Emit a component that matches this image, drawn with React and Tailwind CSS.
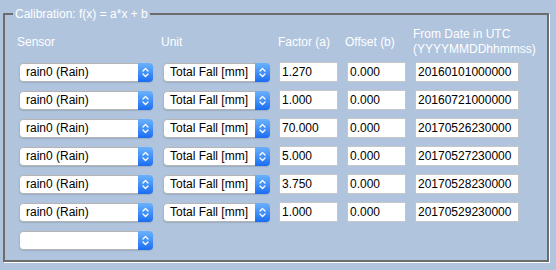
import React from 'react';

const rows = [
  { factor: '1.270', offset: '0.000', date: '20160101000000' },
  { factor: '1.000', offset: '0.000', date: '20160721000000' },
  { factor: '70.000', offset: '0.000', date: '20170526230000' },
  { factor: '5.000', offset: '0.000', date: '20170527230000' },
  { factor: '3.750', offset: '0.000', date: '20170528230000' },
  { factor: '1.000', offset: '0.000', date: '20170529230000' },
];

function Select({ value, width }) {
  return (
    <div
      className={`ml-[2px] flex h-[19px] items-stretch rounded-[4px] border border-[#b4b4b4] bg-white shadow-[0_1px_1px_rgba(0,0,0,0.12)] ${width}`}
    >
      <div className="flex min-w-0 flex-1 items-center pl-[6px] text-[12px] leading-none text-black">{value}</div>
      <div className="-my-px -mr-px flex w-[15px] items-center justify-center rounded-r-[4px] bg-gradient-to-b from-[#6ab2fc] to-[#1a6cf2]">
        <svg width="7" height="11" viewBox="0 0 7 11" fill="none" stroke="white" strokeWidth="1.3" strokeLinecap="round" strokeLinejoin="round">
          <path d="M1 4 L3.5 1.5 L6 4" />
          <path d="M1 7 L3.5 9.5 L6 7" />
        </svg>
      </div>
    </div>
  );
}

function Field({ value, className }) {
  return (
    <div className={`flex h-[20px] w-[59px] items-center border border-[#c6c6c6] bg-white pl-[2px] text-[12px] leading-none text-black ${className}`}>
      {value}
    </div>
  );
}

export default function App() {
  return (
    <div className="h-[270px] w-[556px] bg-[#b0c4de] px-[3px] pt-[7px] font-['Liberation_Sans',Arial,sans-serif]">
      <fieldset className="w-[546px] border-2 border-[#6c6c6c] pb-[6px] pl-[8px] pt-[6px] shadow-[1px_1px_0_#ffffff]">
        <legend className="px-[2px] text-[12px] leading-[14px] text-white">Calibration: f(x) = a*x + b</legend>
        <div className="ml-[4px] grid grid-cols-[144px_117px_67px_68px_1fr]">
          <div className="mb-px flex h-[30px] items-center text-[12px] leading-[15px] text-white">Sensor</div>
          <div className="mb-px flex h-[30px] items-center text-[12px] leading-[15px] text-white">Unit</div>
          <div className="mb-px flex h-[30px] items-center text-[12px] leading-[15px] text-white">Factor (a)</div>
          <div className="mb-px flex h-[30px] items-center text-[12px] leading-[15px] text-white">Offset (b)</div>
          <div className="mb-px flex h-[30px] flex-col justify-center text-[12px] leading-[15px] text-white">
            <span>From Date in UTC</span>
            <span>(YYYYMMDDhhmmss)</span>
          </div>

          {rows.map((r, i) => (
            <React.Fragment key={i}>
              <div className="flex h-[28px] items-center">
                <Select value="rain0 (Rain)" width="w-[134px]" />
              </div>
              <div className="flex h-[28px] items-center">
                <Select value="Total Fall [mm]" width="w-[107px]" />
              </div>
              <div className="flex h-[28px] items-center">
                <Field value={r.factor} className="ml-[1px]" />
              </div>
              <div className="flex h-[28px] items-center">
                <Field value={r.offset} className="ml-[2px]" />
              </div>
              <div className="flex h-[28px] items-center">
                <Field value={r.date} className="ml-[2px] w-[104px]" />
              </div>
            </React.Fragment>
          ))}

          <div className="flex h-[28px] items-center">
            <Select value="" width="w-[134px]" />
          </div>
        </div>
      </fieldset>
    </div>
  );
}
